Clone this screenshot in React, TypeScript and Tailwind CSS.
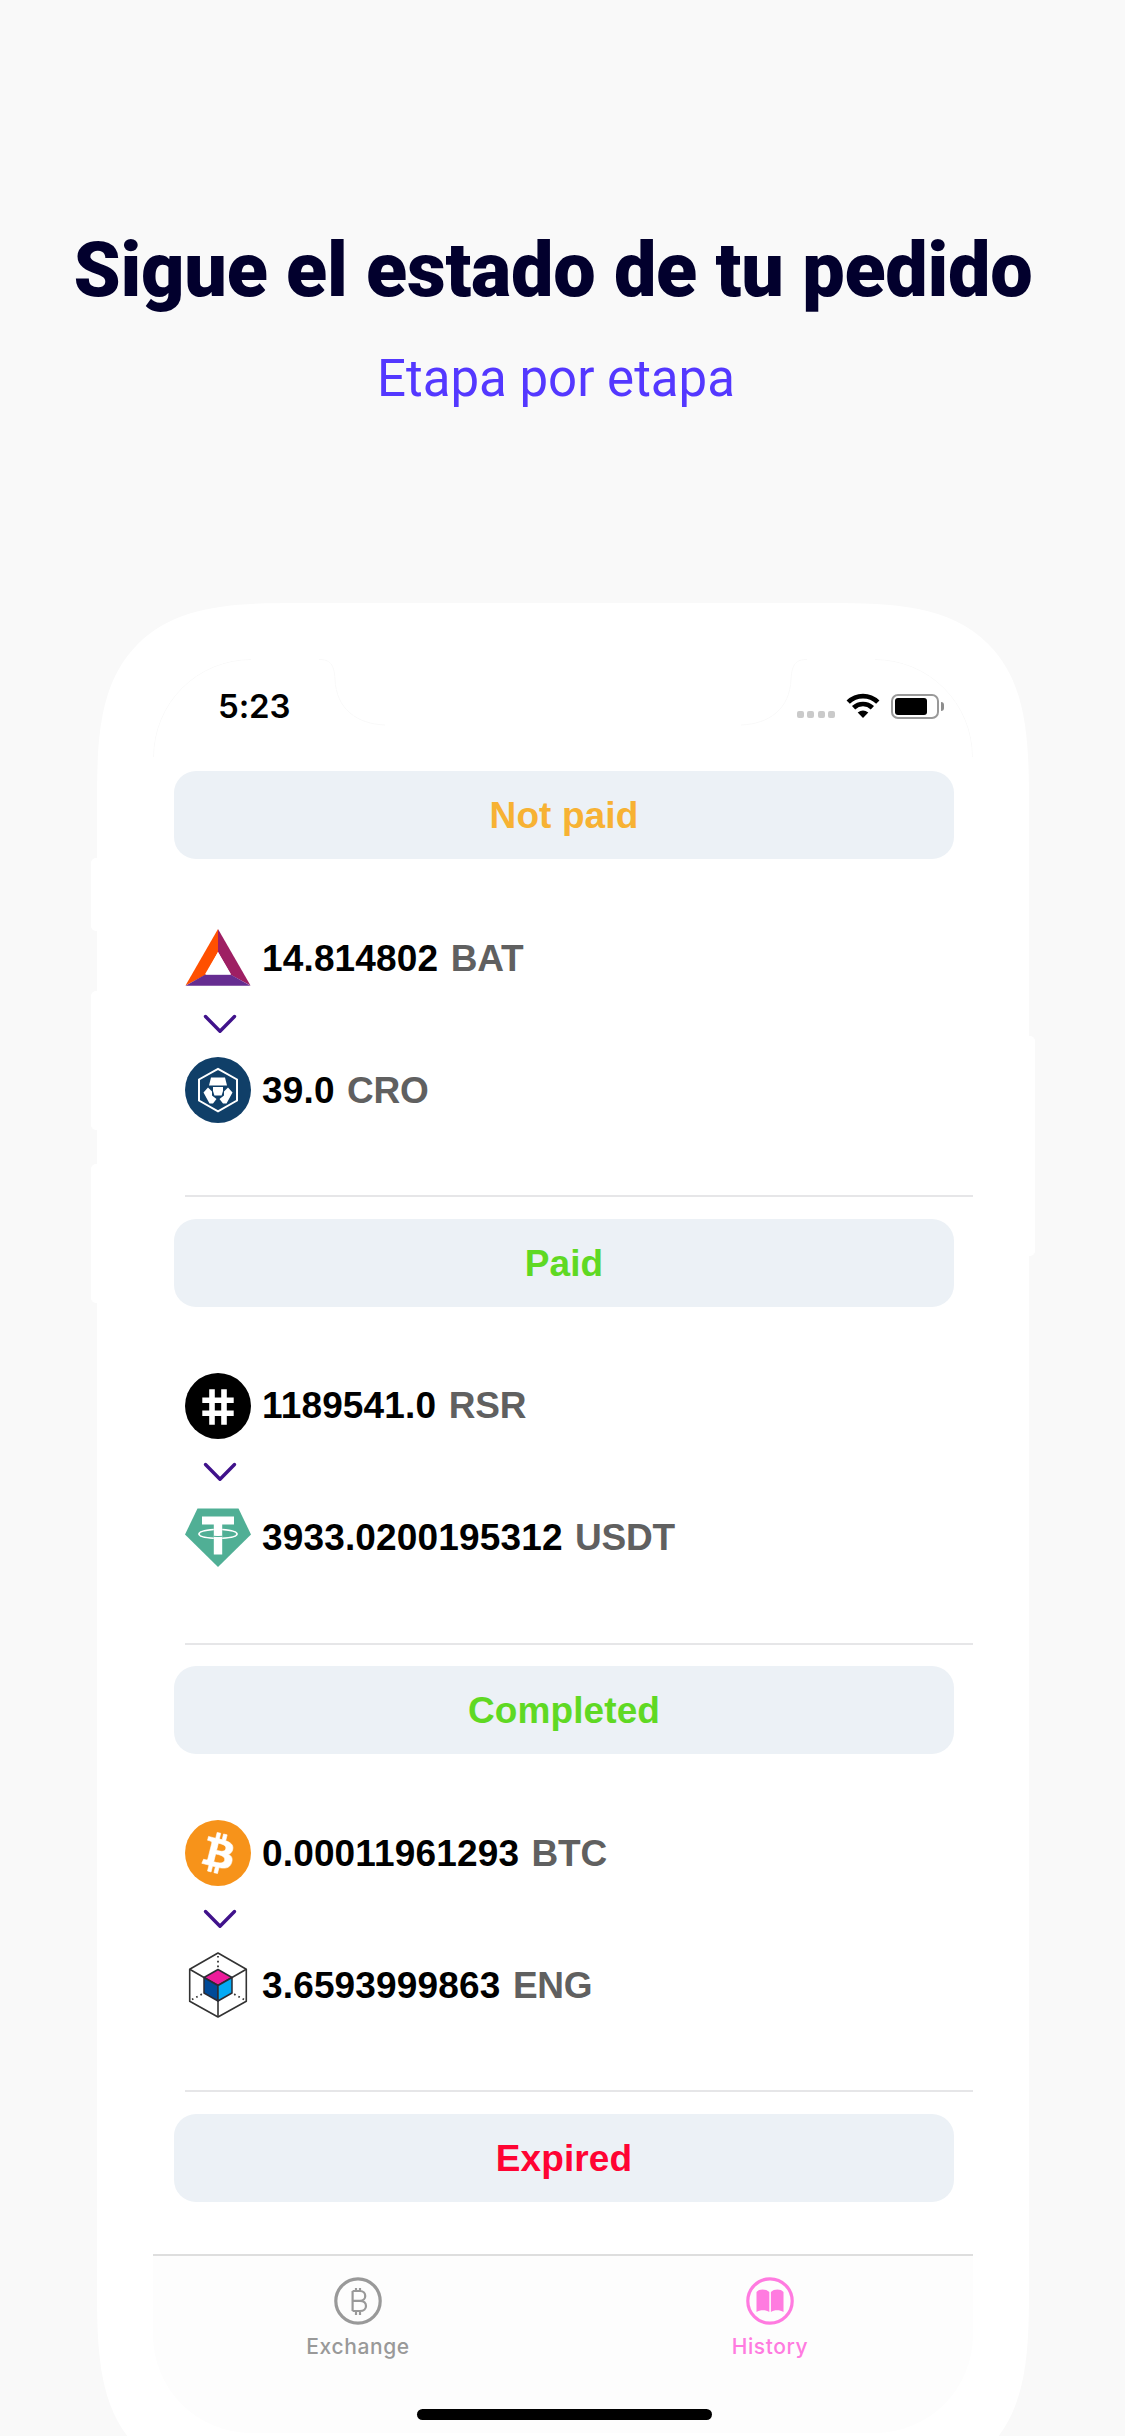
import React from "react";

const ARIAL = "font-['Liberation_Sans',Arial,sans-serif]";

function BatIcon() {
  return (
    <svg viewBox="0 0 66 66" className="size-[66px] shrink-0">
      <path d="M33 4 L0.5 60.5 L20.5 50 L33 27Z" fill="#ff5000" />
      <path d="M33 4 L65.5 60.5 L46 50 L33 27Z" fill="#9e1f63" />
      <path d="M0.5 60.8 H65.5 L46 49.7 H20Z" fill="#662d91" />
      <path d="M33 27 L20 49.3 H46Z" fill="#fff" />
    </svg>
  );
}

function CroIcon() {
  return (
    <svg viewBox="0 0 66 66" className="size-[66px] shrink-0">
      <circle cx="33" cy="33" r="33" fill="#103f68" />
      <path d="M33 11.8 L52 22.5 V43.5 L33 54.3 L14 43.5 V22.5Z" fill="none" stroke="#fff" strokeWidth="2" />
      <path d="M26 20.5 H40 L42 28.5 H24Z" fill="#fff" />
      <path d="M28 30 H38 V34 L36.6 38.5 H29.4 L28 34Z" fill="#fff" />
      <path d="M23 30.5 L27 34.5 V38.5 L31.5 42 L28 46.5 H24.5 L18.5 35.5Z" fill="#fff" />
      <path d="M43 30.5 L39 34.5 V38.5 L34.5 42 L38 46.5 H41.5 L47.5 35.5Z" fill="#fff" />
    </svg>
  );
}

function RsrIcon() {
  return (
    <svg viewBox="0 0 66 66" className="size-[66px] shrink-0">
      <circle cx="33" cy="33" r="33" fill="#000" />
      <path d="M27 16.3 V51.7 M39 16.3 V51.7 M17.3 27.3 H48.7 M17.3 40.3 H48.7" stroke="#fff" strokeWidth="5.6" fill="none" />
    </svg>
  );
}

function UsdtIcon() {
  return (
    <svg viewBox="0 0 66 66" className="size-[66px] shrink-0">
      <path d="M12.5 3.5 H53.5 L66 29.5 L33 62 L0 29.5Z" fill="#50af95" />
      <path d="M17 11.5 H49 V19.5 H37.2 V49.5 H28.8 V19.5 H17Z" fill="#fff" />
      <path d="M28.8 24.5 C9 26 9 32 28.8 33.2 M37.2 24.5 C57 26 57 32 37.2 33.2" fill="none" stroke="#fff" strokeWidth="1.6" />
      <path d="M28.8 31.3 Q33 31.8 37.2 31.3" fill="none" stroke="#50af95" strokeWidth="1" />
    </svg>
  );
}

function BtcIcon() {
  return (
    <svg viewBox="0 0 32 32" className="size-[66px] shrink-0">
      <circle cx="16" cy="16" r="16" fill="#f7931a" />
      <path
        fill="#fff"
        stroke="#fff"
        strokeWidth="0.3"
        d="M23.189 14.02c.314-2.096-1.283-3.223-3.465-3.975l.708-2.84-1.728-.43-.69 2.765c-.454-.114-.92-.22-1.385-.326l.695-2.783L15.596 6l-.708 2.839c-.376-.086-.746-.17-1.104-.26l.002-.009-2.384-.595-.46 1.846s1.283.294 1.256.312c.7.175.826.638.805 1.006l-.806 3.235c.048.012.11.03.18.057l-.183-.045-1.13 4.532c-.086.212-.303.531-.793.41.018.025-1.256-.313-1.256-.313l-.858 1.978 2.25.561c.418.105.828.215 1.231.318l-.715 2.872 1.727.43.708-2.84c.472.127.93.245 1.378.357l-.706 2.828 1.728.43.715-2.866c2.948.558 5.164.333 6.097-2.333.752-2.146-.037-3.385-1.588-4.192 1.13-.26 1.98-1.003 2.207-2.538zm-3.95 5.538c-.533 2.147-4.148.986-5.32.695l.95-3.805c1.172.293 4.929.872 4.37 3.11zm.535-5.569c-.487 1.953-3.495.96-4.47.717l.86-3.45c.975.243 4.118.696 3.61 2.733z"
      />
    </svg>
  );
}

function EngIcon() {
  return (
    <svg viewBox="0 0 66 66" className="size-[66px] shrink-0">
      <g fill="none" stroke="#333" strokeWidth="1.6" strokeLinejoin="round">
        <path d="M33 1 L61.3 17.3 V49.3 L33 65 L4.7 49.3 V17.3Z" />
        <path d="M4.7 17.3 L19 25.5 M61.3 17.3 L47 25.5 M33 48 V65" />
        <path d="M33 4 V18 M7 47.5 L19 41 M59 47.5 L47 41" strokeDasharray="1.6 3.2" strokeWidth="1.8" />
      </g>
      <g stroke="#2b2b33" strokeWidth="1.5" strokeLinejoin="round">
        <path d="M33 17.5 L47 25.5 L33 33.5 L19 25.5Z" fill="#ec1c9b" />
        <path d="M19 25.5 L33 33.5 V49 L19 41Z" fill="#004a98" />
        <path d="M47 25.5 L33 33.5 V49 L47 41Z" fill="#04aaf5" />
      </g>
    </svg>
  );
}

type Leg = { icon: React.ReactNode; amount: string; symbol: string };

function CoinRow({ icon, amount, symbol }: Leg) {
  return (
    <div className="flex h-[66px] items-center gap-[11px]">
      {icon}
      <p className="pt-px text-[37px] leading-[66px] font-bold tracking-[0.15px] whitespace-nowrap text-black">
        {amount} <span className="ml-[2px] tracking-[-0.2px] text-[#606060]">{symbol}</span>
      </p>
    </div>
  );
}

function StatusPill({ label, color }: { label: string; color: string }) {
  return (
    <div className={`mr-[19px] ml-[21px] flex h-[88px] items-center justify-center rounded-[22px] bg-[#ecf1f6] pt-[2px] text-[37px] font-bold tracking-[0.1px] ${color}`}>
      {label}
    </div>
  );
}

function Order({ label, color, from, to }: { label: string; color: string; from: Leg; to: Leg }) {
  return (
    <section className="h-[447.5px]">
      <StatusPill label={label} color={color} />
      <div className="ml-8 flex h-[338px] flex-col border-b-[2px] border-[#e6e6e8] pt-[66px]">
        <CoinRow {...from} />
        <div className="flex h-[66px] w-[70px] items-center justify-center">
          <svg viewBox="0 0 34 20" className="h-5 w-[34px]">
            <path d="M2.5 2.5 L17 17.3 L31.5 2.5" fill="none" stroke="#40128b" strokeWidth="3.4" strokeLinecap="round" strokeLinejoin="round" />
          </svg>
        </div>
        <CoinRow {...to} />
      </div>
    </section>
  );
}

function StatusBar() {
  return (
    <div className="flex h-[112px] items-start justify-between pt-[29px] pr-[29px] pl-[65px]">
      <span className="font-['Inter',sans-serif] text-[33px] leading-[36px] font-semibold tracking-[-0.1px] text-black">5:23</span>
      <div className="flex items-center gap-[11px] pt-[5px]">
        <div className="flex gap-[3.4px] pt-[17px]">
          {[0, 1, 2, 3].map((i) => (
            <i key={i} className="size-[7px] rounded-[2px] bg-[#cacaca]" />
          ))}
        </div>
        <svg viewBox="0 0 34 26" className="h-[26px] w-[34px]">
          <path d="M2.2 9.2 C10.5 1 23.5 1 31.8 9.2" fill="none" stroke="#000" strokeWidth="4.7" />
          <path d="M7.6 14.8 C13 9.7 21 9.7 26.4 14.8" fill="none" stroke="#000" strokeWidth="4.7" />
          <path d="M11.7 19.5 Q17 15.4 22.3 19.5 L17 25Z" fill="#000" />
        </svg>
        <div className="flex items-center gap-[2px]">
          <div className="h-[25px] w-[48px] rounded-[7px] border-2 border-[#999] p-[2px]">
            <div className="h-full w-[32px] rounded-[3px] bg-black" />
          </div>
          <i className="h-[9px] w-[3px] rounded-r-full bg-[#8d8d8d]" />
        </div>
      </div>
    </div>
  );
}

function TabBar() {
  return (
    <nav className="h-[179px] border-t-[2px] border-[#dedede] bg-[#fdfdfd] pt-[21px] font-['Inter',sans-serif] text-[21px] leading-[26px] font-medium tracking-[0.6px]">
      <div className="flex">
        <div className="flex w-1/2 flex-col items-center gap-[9px] text-[#999]">
          <svg viewBox="0 0 48 48" className="size-12" fill="none" stroke="currentColor">
            <circle cx="24" cy="24" r="22.2" strokeWidth="3.2" />
            <path d="M18.6 14 V34 M18.6 14 H26 C33 14 33 23.8 26 23.8 H18.6 M26 23.8 C34 23.8 34 34 26 34 H18.6 M22 11 V14 M26 11 V14 M22 34 V38 M26 34 V38" strokeWidth="2.2" />
          </svg>
          <span>Exchange</span>
        </div>
        <div className="flex w-1/2 flex-col items-center gap-[9px] pl-1 text-[#ff7be0]">
          <svg viewBox="0 0 48 48" className="size-12">
            <circle cx="24" cy="24" r="22.2" fill="none" stroke="currentColor" strokeWidth="3.2" />
            <path d="M10.5 15 C13 11.7 20 11.7 23.3 15 V35 C20 32.5 14 32.5 10.5 35Z M37.5 15 C35 11.7 28 11.7 24.9 15 V35 C28 32.5 34 32.5 37.5 35Z" fill="currentColor" />
          </svg>
          <span>History</span>
        </div>
      </div>
      <div className="mt-[49px] ml-[264px] h-[11px] w-[295px] rounded-full bg-black" />
    </nav>
  );
}

export default function App() {
  return (
    <div className="h-[2436px] w-[1125px] overflow-hidden bg-[#f9f9f9]">
      <header className="h-[603px] pt-[222px] text-center font-['Roboto',sans-serif]">
        <h1 className="mr-[19px] text-[75.5px] leading-[96px] font-black tracking-[-0.25px] whitespace-nowrap text-[#02002d]">Sigue el estado de tu pedido</h1>
        <p className="mt-[29px] mr-[13px] text-[51px] leading-[64px] text-[#5438ff]">Etapa por etapa</p>
      </header>

      <main className="relative ml-[97px] h-[1886px] w-[932px] rounded-[200px] bg-white p-14 [corner-shape:superellipse(1.6)]">
        <i className="absolute top-[255px] -left-[6px] h-[73px] w-[10px] rounded-l-[5px] bg-white" />
        <i className="absolute top-[388px] -left-[6px] h-[139px] w-[10px] rounded-l-[5px] bg-white" />
        <i className="absolute top-[561px] -left-[6px] h-[139px] w-[10px] rounded-l-[5px] bg-white" />
        <i className="absolute top-[433px] -right-[6px] h-[220px] w-[10px] rounded-r-[5px] bg-white" />

        <div className={`relative h-[1774px] w-[820px] overflow-hidden rounded-[98px] bg-white ${ARIAL}`}>
          <svg viewBox="0 0 820 100" className="absolute top-0 left-0 h-[100px] w-[820px]" fill="none" stroke="#f9f9f9">
            <path d="M0.5 98 A97.5 97.5 0 0 1 98 0.5 M166 0.5 C177 0.5 181 5 182 20 C183 50 204 65 232 66 M588 66 C616 65 637 50 638 20 C639 5 643 0.5 654 0.5 M722 0.5 A97.5 97.5 0 0 1 819.5 98" />
          </svg>
          <StatusBar />
          <div className="h-[1483px] overflow-hidden">
            <Order
              label="Not paid"
              color="text-[#f7b233]"
              from={{ icon: <BatIcon />, amount: "14.814802", symbol: "BAT" }}
              to={{ icon: <CroIcon />, amount: "39.0", symbol: "CRO" }}
            />
            <Order
              label="Paid"
              color="text-[#5fd923]"
              from={{ icon: <RsrIcon />, amount: "1189541.0", symbol: "RSR" }}
              to={{ icon: <UsdtIcon />, amount: "3933.0200195312", symbol: "USDT" }}
            />
            <Order
              label="Completed"
              color="text-[#5fd923]"
              from={{ icon: <BtcIcon />, amount: "0.00011961293", symbol: "BTC" }}
              to={{ icon: <EngIcon />, amount: "3.6593999863", symbol: "ENG" }}
            />
            <StatusPill label="Expired" color="text-[#ff0433]" />
          </div>
          <TabBar />
        </div>
      </main>
    </div>
  );
}
